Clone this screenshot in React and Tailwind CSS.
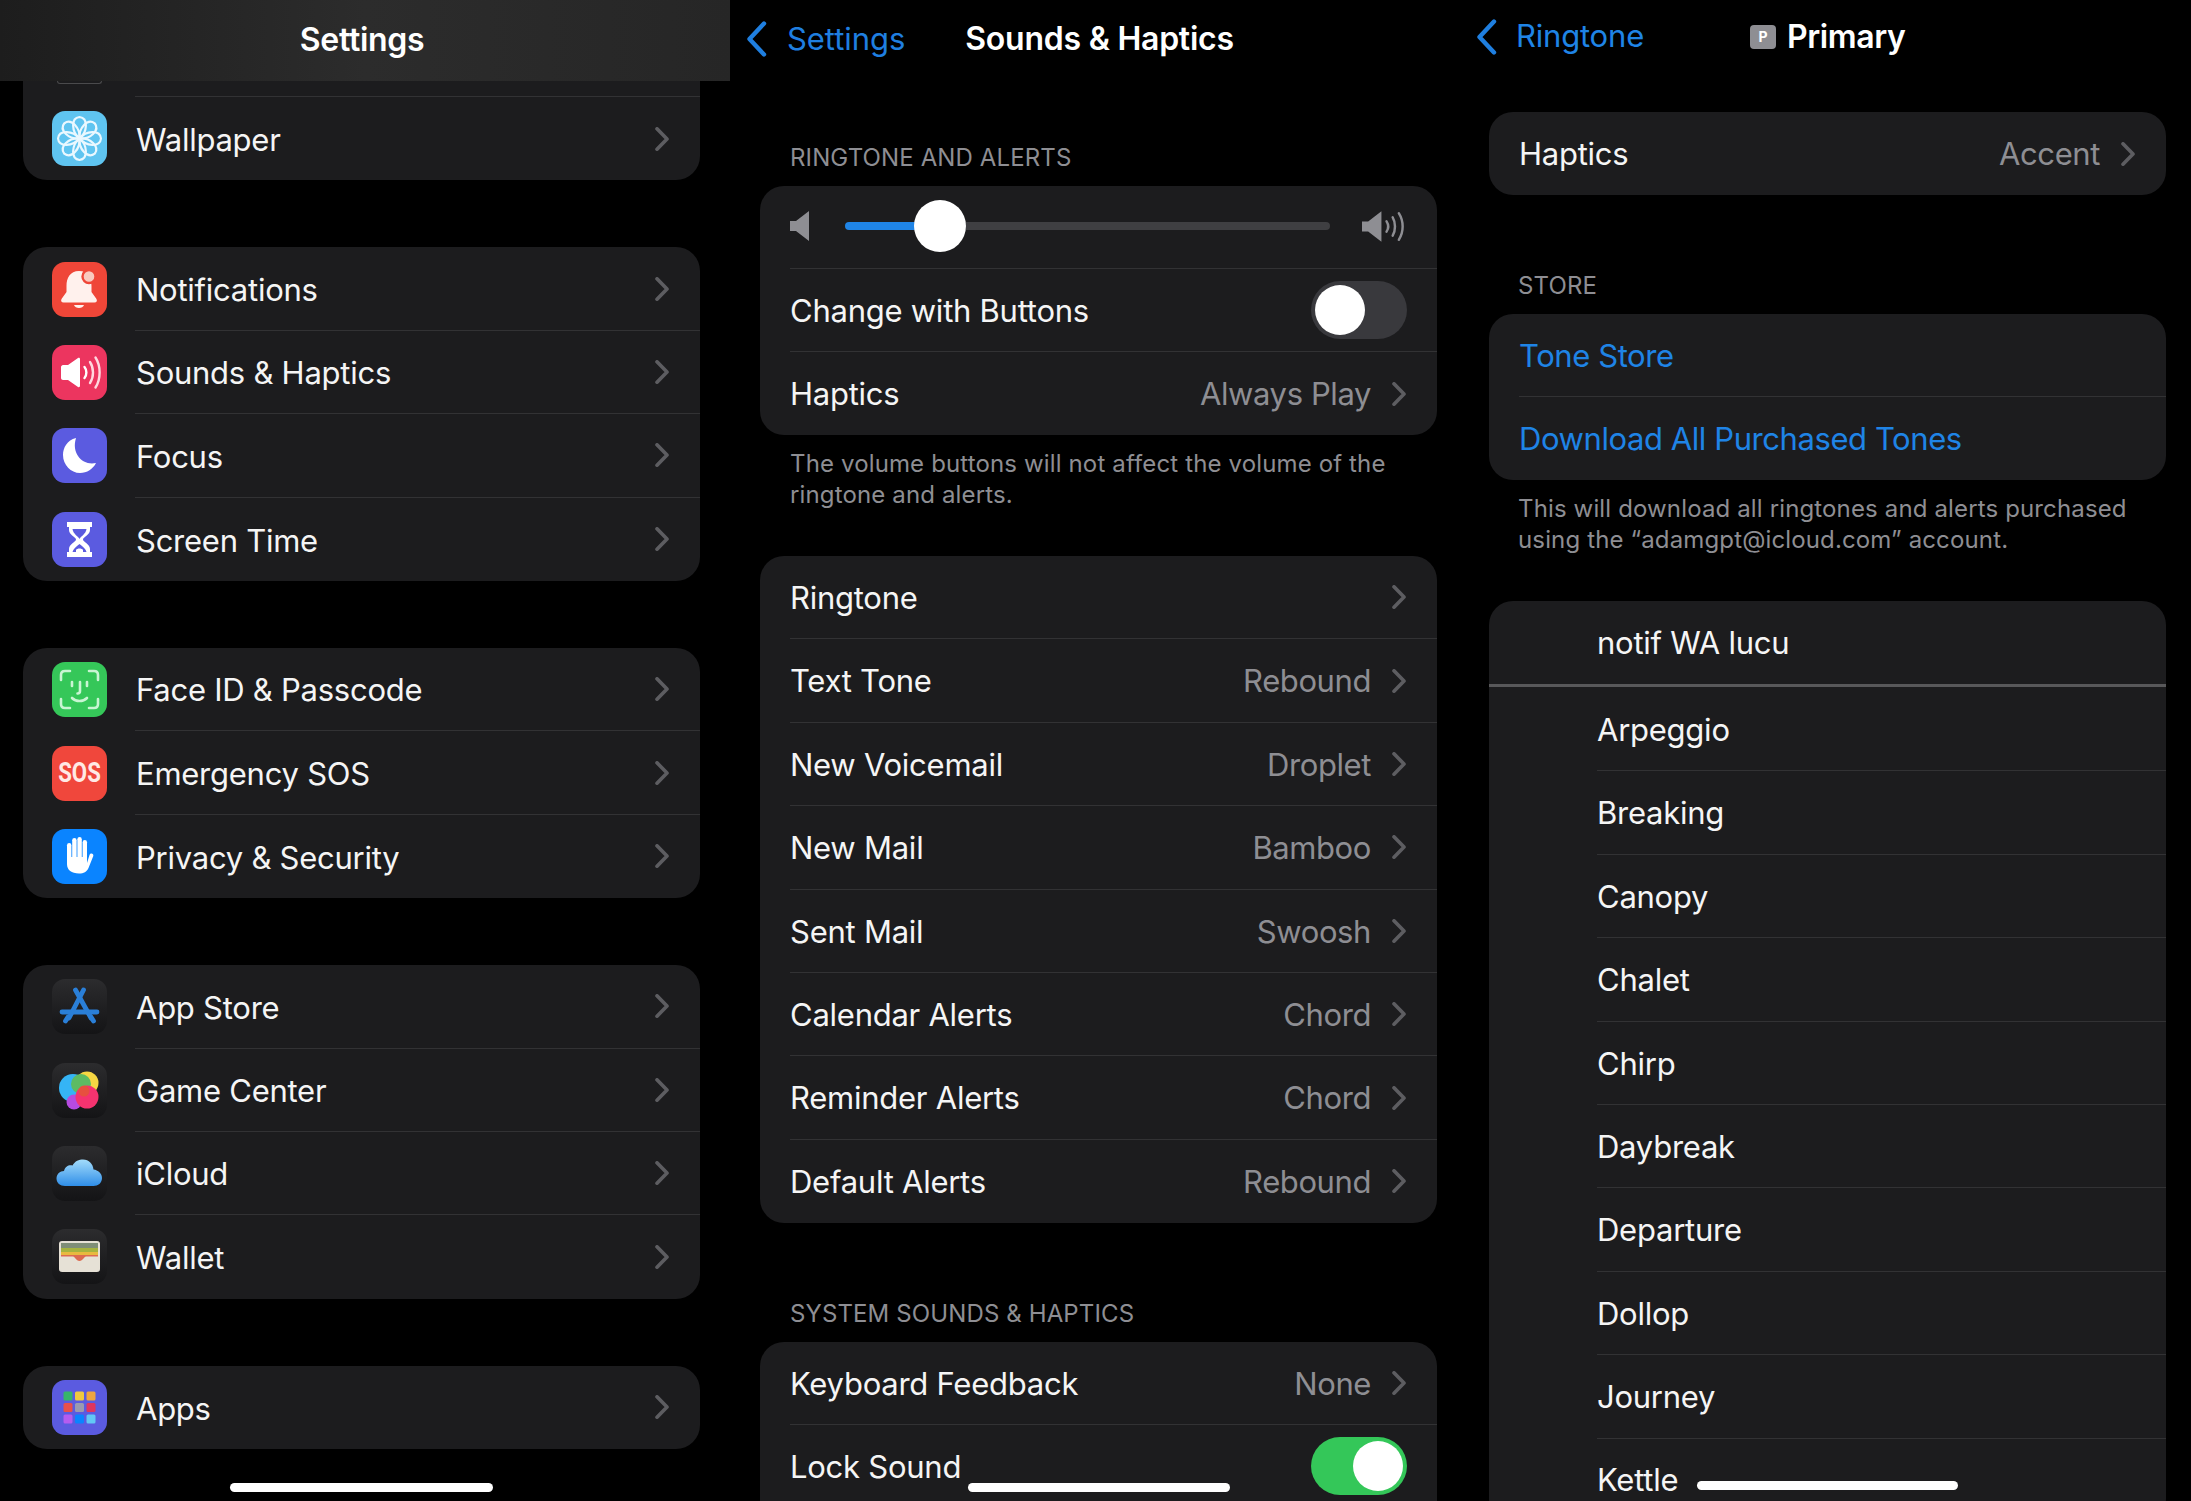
import React from "react";

const font = { fontFamily: "Inter, 'Liberation Sans', sans-serif" };

function Chevron() {
  return (
    <svg viewBox="0 0 14 24" className="w-[14px] h-[24px] shrink-0" fill="none">
      <path d="M2 1.8 L12 12 L2 22.2" stroke="#5d5d61" strokeWidth="3.6" strokeLinecap="round" strokeLinejoin="round" />
    </svg>
  );
}

function BackChevron() {
  return (
    <svg viewBox="0 0 21 36" className="w-[21px] h-[36px] shrink-0" fill="none">
      <path d="M18 2.5 L3.5 18 L18 33.5" stroke="#1f7fe0" strokeWidth="4.4" strokeLinecap="round" strokeLinejoin="round" />
    </svg>
  );
}

function IconBox({ bg, children }) {
  return <div className={`w-[55px] h-[55px] rounded-[13px] shrink-0 overflow-hidden ${bg}`}>{children}</div>;
}

const Svg = ({ children }) => (
  <svg viewBox="0 0 55 55" className="w-[55px] h-[55px] block" fill="none">{children}</svg>
);

const WallpaperIcon = () => (
  <IconBox bg="bg-[#5fc4f0]">
    <Svg>
      {[0, 45, 90, 135, 180, 225, 270, 315].map((a) => (
        <path key={a} transform={`rotate(${a} 27.5 27.5)`} d="M27.5 27.5 C19.5 21 18.5 7 27.5 6 C36.5 7 35.5 21 27.5 27.5 Z" stroke="#eaf8ff" strokeWidth="2.2" />
      ))}
      <circle cx="27.5" cy="27.5" r="2.5" fill="#eaf8ff" />
    </Svg>
  </IconBox>
);

const BellIcon = () => (
  <IconBox bg="bg-[#ef4638]">
    <Svg>
      <path d="M27 9 C18 9 14.5 16 14.5 24 L14.5 30 L9.5 37 C8.5 39 9.5 40.5 11.5 40.5 L42.5 40.5 C44.5 40.5 45.5 39 44.5 37 L39.5 30 L39.5 24 C39.5 16 36 9 27 9 Z" fill="#fff1ed" />
      <path d="M22 43 L32 43 C31 47 23 47 22 43 Z" fill="#fff1ed" />
      <circle cx="37" cy="14.5" r="6.5" fill="#f9c9bf" stroke="#ef4638" strokeWidth="2.4" />
    </Svg>
  </IconBox>
);

const SoundIcon = () => (
  <IconBox bg="bg-[#ec355f]">
    <Svg>
      <path d="M9 22 C9 21 10 20 11 20 L16 20 L26 13 C27 12.5 28 13 28 14 L28 41 C28 42 27 42.5 26 42 L16 35 L11 35 C10 35 9 34 9 33 Z" fill="#fff" />
      <path d="M32.5 22 C35 25 35 30 32.5 33" stroke="#fff" strokeWidth="2.4" strokeLinecap="round" />
      <path d="M38 17 C42 23 42 32 38 38" stroke="#ffd7df" strokeWidth="2.4" strokeLinecap="round" />
      <path d="M43.5 12.5 C49 21 49 34 43.5 42.5" stroke="#ffd7df" strokeWidth="2.4" strokeLinecap="round" />
    </Svg>
  </IconBox>
);

const MoonIcon = () => (
  <IconBox bg="bg-[#5b5be0]">
    <Svg>
      <path d="M24 10 C15 12 11 20 11 27 C11 37 19 45 28 45 C35 45 41 41 44 35 C31 38 19 26 24 10 Z" fill="#fff" />
    </Svg>
  </IconBox>
);

const HourglassIcon = () => (
  <IconBox bg="bg-[#5b5be0]">
    <Svg>
      <path d="M15 10 H40 V15 H38 V18 C38 23 31 25 31 27.5 C31 30 38 32 38 37 V40 H40 V45 H15 V40 H17 V37 C17 32 24 30 24 27.5 C24 25 17 23 17 18 V15 H15 Z" fill="#fff" />
      <path d="M20.5 17 H34.5 C34 22 28 25 27.5 27 C27 25 21 22 20.5 17 Z M27.5 32 C24 35 21 37 20.5 40 H34.5 C34 37 31 35 27.5 32 Z" fill="#5b5be0" />
      <path d="M24 38 C25 36 30 36 31 38 V40 H24 Z" fill="#fff" />
    </Svg>
  </IconBox>
);

const FaceIcon = () => (
  <IconBox bg="bg-[#35c759]">
    <Svg>
      <g stroke="#c9f5d3" strokeWidth="2.6" strokeLinecap="round" fill="none">
        <path d="M9 18 V13 C9 10.5 10.5 9 13 9 H18" />
        <path d="M37 9 H42 C44.5 9 46 10.5 46 13 V18" />
        <path d="M9 37 V42 C9 44.5 10.5 46 13 46 H18" />
        <path d="M37 46 H42 C44.5 46 46 44.5 46 42 V37" />
        <path d="M20 20 V24" />
        <path d="M35 20 V24" />
        <path d="M28 20 V29 C28 31 27 31.5 25.5 31.5" />
        <path d="M20 36 C24 40 31 40 35 36" />
      </g>
    </Svg>
  </IconBox>
);

const SosIcon = () => (
  <IconBox bg="bg-[#f0473c]">
    <div className="w-full h-full flex items-center justify-center text-[27px] font-bold text-[#ffe9e5] scale-x-[0.82]" style={{ fontFamily: "Roboto, sans-serif" }}>SOS</div>
  </IconBox>
);

const HandIcon = () => (
  <IconBox bg="bg-[#0a84ff]">
    <Svg>
      <g fill="#fff">
        <rect x="15" y="14" width="4.4" height="22" rx="2.2" />
        <rect x="20.2" y="9" width="4.4" height="26" rx="2.2" />
        <rect x="25.4" y="8" width="4.4" height="26" rx="2.2" />
        <rect x="30.6" y="11" width="4.4" height="25" rx="2.2" />
        <path d="M15 28 H35 V34 L37.5 26 C38.5 23.5 42 24.5 41.3 27 L36.5 39 C34.5 43 32 44.5 27 44.5 C19.5 44.5 15 41 15 35 Z" />
      </g>
    </Svg>
  </IconBox>
);

const DarkBox = ({ children }) => (
  <div className="w-[55px] h-[55px] rounded-[13px] shrink-0 overflow-hidden bg-gradient-to-b from-[#2c2c2e] to-[#141416]">{children}</div>
);

const AppStoreIcon = () => (
  <DarkBox>
    <Svg>
      <g stroke="#2a7fd8" strokeWidth="4.8" strokeLinecap="round">
        <path d="M31.5 11 L17 39" />
        <path d="M23.5 11 L39 39" />
        <path d="M10 33 H45" />
        <path d="M13.5 42 L16 38" />
        <path d="M41.5 42 L39 38" />
      </g>
    </Svg>
  </DarkBox>
);

const GameIcon = () => (
  <DarkBox>
    <Svg>
      <circle cx="35" cy="20" r="11.5" fill="#f6d743" />
      <circle cx="21" cy="25" r="14" fill="#35b4f5" />
      <circle cx="29" cy="21" r="10" fill="#5dbb63" />
      <circle cx="22" cy="39" r="7.5" fill="#b64be0" />
      <circle cx="35" cy="34" r="11.5" fill="#f5336f" />
      <circle cx="32" cy="28" r="5.5" fill="#e7503f" />
    </Svg>
  </DarkBox>
);

const CloudIcon = () => (
  <DarkBox>
    <Svg>
      <defs>
        <linearGradient id="cloudg" x1="0" y1="0" x2="0" y2="1">
          <stop offset="0" stopColor="#a3dcfb" />
          <stop offset="1" stopColor="#2f8ee8" />
        </linearGradient>
      </defs>
      <path d="M13 40 C8 40 4.5 37 4.5 32.5 C4.5 28 8 25 12 25 C13 20.5 17 18.5 20.5 19.5 C23 15 27 13.5 31 13.5 C37 13.5 41 18 41.5 23.5 C46 24 50 27.5 50 32 C50 37 46 40 41.5 40 Z" fill="url(#cloudg)" />
    </Svg>
  </DarkBox>
);

const WalletIcon = () => (
  <DarkBox>
    <Svg>
      <rect x="7" y="12" width="41" height="31" rx="3" fill="#e6e1d6" />
      <rect x="9" y="14" width="37" height="5" fill="#7f8e77" />
      <rect x="9" y="19" width="37" height="4" fill="#a5b33f" />
      <rect x="9" y="23" width="37" height="3" fill="#e8b93f" />
      <path d="M9 26 H46 V27.5 H34 C32 27.5 31 32 27.5 32 C24 32 23 27.5 21 27.5 H9 Z" fill="#dd6a50" />
    </Svg>
  </DarkBox>
);

const AppsIcon = () => (
  <IconBox bg="bg-[#5b5be0]">
    <Svg>
      {[
        ["#37b56a", "#f0c93f", "#f0a53f"],
        ["#e8504a", "#9a9ab0", "#e0355f"],
        ["#b45cf0", "#0a84ff", "#62c8f5"],
      ].map((r, i) =>
        r.map((c, j) => <rect key={`${i}${j}`} x={11.5 + j * 11.5} y={11.5 + i * 11.5} width="9" height="9" rx="1.5" fill={c} />)
      )}
    </Svg>
  </IconBox>
);

function SettingsRow({ icon, label }) {
  return (
    <div className="flex items-center h-[83.4px] pl-[29px]">
      {icon}
      <div className="ml-[28px] flex-1 h-full flex items-center justify-between pr-[31px] pl-[1px] border-b border-[#323234] group-last:border-b-0">
        <span className="pt-[3px] text-[31px] tracking-[-0.25px] text-[#f5f5f5]">{label}</span>
        <Chevron />
      </div>
    </div>
  );
}

function Group({ children }) {
  return <div className="mt-[67px] ml-[23px] mr-[30px] bg-[#1c1c1e] rounded-[24px] overflow-hidden">{children}</div>;
}

function Item({ children }) {
  return <div className="group">{children}</div>;
}

function Row({ label, value, chevron = true, blue, children, h = "h-[83px]" }) {
  return (
    <div className={`ml-[30px] ${h} pr-[31px] flex items-center justify-between border-b border-[#323234] last:border-b-0`}>
      <span className={`pt-[2px] text-[31px] ${blue ? "text-[#1f84e6] tracking-[-0.42px]" : "text-[#f5f5f5] tracking-[-0.25px]"}`}>{label}</span>
      {children}
      {(value || chevron) && !children && !blue && (
        <div className="flex items-center gap-[21px]">
          {value && <span className="pt-[2px] text-[31px] tracking-[-0.4px] text-[#8e8e93]">{value}</span>}
          <Chevron />
        </div>
      )}
    </div>
  );
}

function Card({ className, children }) {
  return <div className={`bg-[#1c1c1e] rounded-[24px] overflow-hidden ${className}`}>{children}</div>;
}

function Label({ className, children }) {
  return <div className={`h-[31px] leading-[31px] text-[24px] tracking-[0.12px] text-[#8e8e93] ${className}`}>{children}</div>;
}

function Foot({ className, children }) {
  return <div className={`leading-[31px] text-[24px] tracking-[0.14px] text-[#8e8e93] ${className}`}>{children}</div>;
}

function HomeBar({ left, width, top }) {
  return <div className={`absolute h-[9px] rounded-full bg-white ${left} ${width} ${top}`} />;
}

function Toggle({ on }) {
  return (
    <div className={`w-[96px] h-[58px] rounded-full p-[4px] flex ${on ? "bg-[#34c759] justify-end" : "bg-[#39393d] justify-start"}`}>
      <div className="w-[50px] h-[50px] rounded-full bg-white" />
    </div>
  );
}

function SpeakerGlyph({ arcs }) {
  return (
    <svg viewBox={arcs ? "0 0 44 32" : "0 0 20 32"} className={arcs ? "w-[45px] h-[33px]" : "w-[20px] h-[32px]"} fill="none">
      <path d="M0 11 H6 L19 1 V31 L6 21 H0 Z" fill="#8e8e93" />
      {arcs && (
        <g stroke="#8e8e93" strokeWidth="2.4" strokeLinecap="round">
          <path d="M24 11 C26 14 26 18 24 21" />
          <path d="M30 7 C33 12 33 20 30 25" />
          <path d="M36 3 C41 11 41 21 36 29" />
        </g>
      )}
    </svg>
  );
}

export default function App() {
  return (
    <div className="flex w-[2191px] h-[1501px] bg-black overflow-hidden" style={font}>
      {/* Panel 1 */}
      <div className="relative w-[730px] h-[1501px] overflow-hidden shrink-0">
        <div className="h-[81px] flex items-center justify-center bg-gradient-to-r from-[#1d1d1d] via-[#2c2c2c] to-[#262626] pr-[6px] pb-[2px]">
          <span className="text-[32px] font-semibold text-white tracking-[-0.3px]">Settings</span>
        </div>
        <div className="ml-[23px] mr-[30px] bg-[#1c1c1e] rounded-b-[24px] overflow-hidden">
          <div className="h-[16px] flex items-start">
            <div className="ml-[34px] w-[45px] h-[3px] rounded-b-[3px] border-x border-b border-[#4a4a4c]" />
            <div className="ml-[33px] flex-1 h-full border-b border-[#323234]" />
          </div>
          <div className="flex items-center h-[83.4px] pl-[29px]">
            <WallpaperIcon />
            <div className="ml-[28px] flex-1 h-full flex items-center justify-between pr-[31px] pl-[1px]">
              <span className="pt-[3px] text-[31px] tracking-[-0.25px] text-[#f5f5f5]">Wallpaper</span>
              <Chevron />
            </div>
          </div>
        </div>
        <Group>
          <Item><SettingsRow icon={<BellIcon />} label="Notifications" /></Item>
          <Item><SettingsRow icon={<SoundIcon />} label="Sounds & Haptics" /></Item>
          <Item><SettingsRow icon={<MoonIcon />} label="Focus" /></Item>
          <Item><SettingsRow icon={<HourglassIcon />} label="Screen Time" /></Item>
        </Group>
        <Group>
          <Item><SettingsRow icon={<FaceIcon />} label="Face ID & Passcode" /></Item>
          <Item><SettingsRow icon={<SosIcon />} label="Emergency SOS" /></Item>
          <Item><SettingsRow icon={<HandIcon />} label="Privacy & Security" /></Item>
        </Group>
        <Group>
          <Item><SettingsRow icon={<AppStoreIcon />} label="App Store" /></Item>
          <Item><SettingsRow icon={<GameIcon />} label="Game Center" /></Item>
          <Item><SettingsRow icon={<CloudIcon />} label="iCloud" /></Item>
          <Item><SettingsRow icon={<WalletIcon />} label="Wallet" /></Item>
        </Group>
        <Group>
          <Item><SettingsRow icon={<AppsIcon />} label="Apps" /></Item>
        </Group>
        <HomeBar left="left-[230px]" width="w-[263px]" top="top-[1483px]" />
      </div>

      {/* Panel 2 */}
      <div className="relative w-[730px] h-[1501px] overflow-hidden shrink-0">
        <div className="h-[78px] flex items-center pl-[16px]">
          <BackChevron />
          <span className="ml-[20px] text-[31px] tracking-[-0.05px] text-[#1f7fe0]">Settings</span>
          <span className="ml-[60px] text-[32px] font-semibold text-white tracking-[-0.25px]">Sounds &amp; Haptics</span>
        </div>
        <Label className="mt-[64px] ml-[60px]">RINGTONE AND ALERTS</Label>
        <Card className="mt-[13px] ml-[30px] mr-[23px]">
          <div className="ml-[30px] h-[83px] pr-[30px] pb-[2px] flex items-center border-b border-[#323234]">
            <SpeakerGlyph />
            <div className="ml-[35px] flex-1 flex items-center">
              <div className="w-[70px] h-[8px] rounded-l-full bg-[#1f84e6]" />
              <div className="w-[52px] h-[52px] rounded-full bg-white shrink-0 -ml-[1px]" />
              <div className="flex-1 h-[8px] rounded-r-full bg-[#3f3f42]" />
            </div>
            <div className="ml-[32px]"><SpeakerGlyph arcs /></div>
          </div>
          <Row label="Change with Buttons"><div className="-mr-[1px]"><Toggle /></div></Row>
          <Row label="Haptics" value="Always Play" />
        </Card>
        <Foot className="mt-[13px] ml-[60px] mr-[30px]">The volume buttons will not affect the volume of the ringtone and alerts.</Foot>
        <Card className="mt-[46px] ml-[30px] mr-[23px]">
          <Row label="Ringtone" h="h-[83.4px]" />
          <Row label="Text Tone" value="Rebound" h="h-[83.4px]" />
          <Row label="New Voicemail" value="Droplet" h="h-[83.4px]" />
          <Row label="New Mail" value="Bamboo" h="h-[83.4px]" />
          <Row label="Sent Mail" value="Swoosh" h="h-[83.4px]" />
          <Row label="Calendar Alerts" value="Chord" h="h-[83.4px]" />
          <Row label="Reminder Alerts" value="Chord" h="h-[83.4px]" />
          <Row label="Default Alerts" value="Rebound" h="h-[83.4px]" />
        </Card>
        <Label className="mt-[75px] ml-[60px]">SYSTEM SOUNDS &amp; HAPTICS</Label>
        <Card className="mt-[13px] ml-[30px] mr-[23px]">
          <Row label="Keyboard Feedback" value="None" />
          <Row label="Lock Sound"><div className="-mr-[1px]"><Toggle on /></div></Row>
          <div className="h-[83px]" />
        </Card>
        <HomeBar left="left-[238px]" width="w-[262px]" top="top-[1483px]" />
      </div>

      {/* Panel 3 */}
      <div className="relative w-[731px] h-[1501px] overflow-hidden shrink-0">
        <div className="h-[73px] flex items-center pl-[16px]">
          <BackChevron />
          <span className="ml-[19px] text-[31px] tracking-[-0.2px] text-[#1f84e6]">Ringtone</span>
          <span className="ml-[106px] w-[26px] h-[24px] rounded-[4px] bg-[#8e8e93] text-white text-[14px] font-bold flex items-center justify-center">P</span>
          <span className="ml-[11px] text-[32px] font-semibold text-white tracking-[-0.4px]">Primary</span>
        </div>
        <Card className="mt-[39px] ml-[29px] mr-[25px]">
          <Row label="Haptics" value="Accent" />
        </Card>
        <Label className="mt-[75px] ml-[58px]">STORE</Label>
        <Card className="mt-[13px] ml-[29px] mr-[25px]">
          <Row label="Tone Store" blue />
          <Row label="Download All Purchased Tones" blue />
        </Card>
        <Foot className="mt-[13px] ml-[58px] mr-[30px]">This will download all ringtones and alerts purchased using the “adamgpt@icloud.com” account.</Foot>
        <Card className="mt-[46px] ml-[29px] mr-[25px]">
          <div className="h-[86px] flex items-center pl-[108px] border-b-[3px] border-[#58585a]">
            <span className="pt-[1px] text-[31px] tracking-[-0.25px] text-[#f5f5f5]">notif WA lucu</span>
          </div>
          <div className="pt-[1px]">
            {["Arpeggio", "Breaking", "Canopy", "Chalet", "Chirp", "Daybreak", "Departure", "Dollop", "Journey", "Kettle"].map((n) => (
              <div key={n} className="ml-[108px] h-[83.4px] flex items-center border-b border-[#323234]">
                <span className="pt-[2px] text-[31px] tracking-[-0.25px] text-[#f5f5f5]">{n}</span>
              </div>
            ))}
          </div>
        </Card>
        <HomeBar left="left-[237px]" width="w-[261px]" top="top-[1481px]" />
      </div>
    </div>
  );
}
